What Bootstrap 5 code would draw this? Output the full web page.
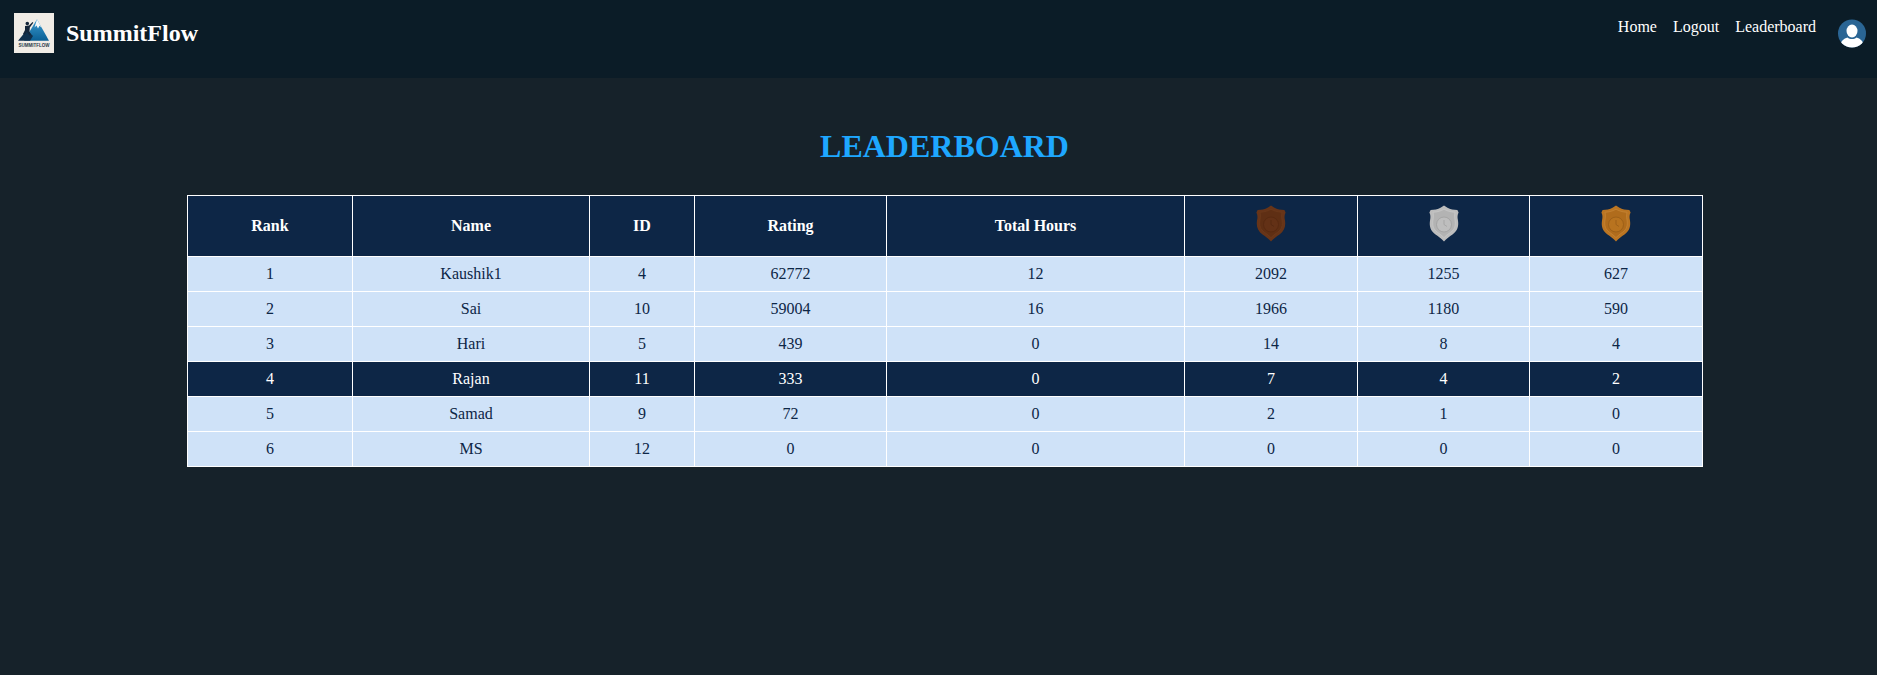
<!DOCTYPE html>
<html lang="en">
<head>
    <meta charset="UTF-8">
    <meta name="viewport" content="width=device-width, initial-scale=1.0">
    <title>SummitFlow - Leaderboard</title>
    <link href="https://cdn.jsdelivr.net/npm/bootstrap@5.3.0/dist/css/bootstrap.min.css" rel="stylesheet">
    <style>
        body {
            background: #16222a;
            font-family: "Liberation Serif", "Times New Roman", serif;
            font-size: 16px;
            color: #fff;
            min-height: 675px;
        }
        .top-bar {
            background: #0b1c27;
            height: 78px;
            padding: 13px 11px 0 14px;
            align-items: flex-start;
        }
        .logo-box {
            width: 40px;
            height: 40px;
            display: block;
        }
        .brand-name {
            color: #fff;
            font-size: 24px;
            font-weight: 700;
            line-height: 40px;
            padding: 0;
            margin: 0 0 0 12px;
        }
        .top-links {
            gap: 16px;
            margin-right: 22px;
        }
        .top-links .nav-link {
            color: #fff;
            padding: 0;
            line-height: 27px;
        }
        .user-pic {
            width: 28px;
            height: 29px;
            display: block;
            margin-top: 6px;
        }
        .board-wrap {
            width: 1515px;
            margin: 0 0 0 187px;
        }
        .page-title {
            color: #1ea7ff;
            font-family: inherit;
            font-size: 32px;
            font-weight: 700;
            line-height: 37px;
            text-align: center;
            margin: 50px 0 30px;
        }
        .board {
            width: 1515px;
            table-layout: fixed;
            border-collapse: collapse;
            text-align: center;
        }
        .board th, .board td {
            border: 1px solid #fff;
            vertical-align: middle;
            padding: 0;
        }
        .board th {
            background: #0d2646;
            color: #fff;
            font-weight: 700;
            height: 61px;
        }
        .board td {
            background: #cfe2f8;
            color: #0d2646;
            height: 35px;
        }
        .board tr.me td {
            background: #0d2646;
            color: #fff;
        }
        .medal {
            width: 30px;
            height: 37px;
            display: block;
            margin: -6px auto 0;
        }
    </style>
</head>
<body>
    <svg width="0" height="0" class="position-absolute">
        <defs>
            <path id="shield" d="M15 .6 L18.500 2.800 C21 4.400 25 4.800 28.400 5 L29.600 7.500 C28.400 10 28.300 12 28.900 15 C30 21 28.500 26 23.500 29.500 C20.500 31.600 17.500 33.500 15 36.400 C12.500 33.500 9.500 31.600 6.500 29.500 C1.500 26 0 21 1.100 15 C1.700 12 1.600 10 .4 7.500 L1.600 5 C5 4.800 9 4.400 11.500 2.800 Z"/>
            <path id="shield-in" d="M15 4.200 C18 6 21.500 7 26 7.300 C25.400 10 25.400 12 26 15 C27 20.500 25.500 24.500 21.500 27.300 C19 29 17 30.500 15 32.600 C13 30.500 11 29 8.500 27.300 C4.500 24.500 3 20.500 4 15 C4.600 12 4.600 10 4 7.300 C8.500 7 12 6 15 4.200 Z"/>
            <path id="hands" d="M15 15 L15 19.500 L18 21.500"/>
        </defs>
    </svg>

    <nav class="d-flex justify-content-between top-bar">
        <div class="d-flex">
            <svg class="logo-box" viewBox="0 0 40 40" role="img" aria-label="SummitFlow logo">
                <defs>
                    <linearGradient id="peak" x1="0" y1="0" x2="0" y2="1">
                        <stop offset="0" stop-color="#3a9bd0"/>
                        <stop offset="1" stop-color="#0b5f94"/>
                    </linearGradient>
                </defs>
                <rect width="40" height="40" fill="#f0ece6"/>
                <path d="M10 27.700 L23 6.300 L35 27.700 Z" fill="url(#peak)"/>
                <path d="M23 6.300 L27.500 14.500 L25.500 12.800 L24 15.500 L22.500 12.500 L20.500 14.500 Z" fill="#f4f7f8"/>
                <path d="M4 27.700 L10 20.500 L14 18 L19 23 L16 27.700 Z" fill="#10304c"/>
                <path d="M11.500 10.500 a1.800 1.800 0 1 1 3.600 0 a1.800 1.800 0 1 1 -3.600 0 M11 13 L15 12.500 L18.500 9 L19.300 9.800 L15.800 14.500 L15.500 18.500 L17 21.500 L15.500 22.500 L13 19 L10.500 22 L9 21 L11 17 Z" fill="#14263a"/>
                <text x="20" y="33.500" text-anchor="middle" font-family="Liberation Sans, sans-serif" font-size="4.500" font-weight="700" fill="#27394a">SUMMITFLOW</text>
            </svg>
            <div class="brand-name">SummitFlow</div>
        </div>
        <div class="d-flex">
            <ul class="nav top-links">
                <li class="nav-item"><a class="nav-link" href="#">Home</a></li>
                <li class="nav-item"><a class="nav-link" href="#">Logout</a></li>
                <li class="nav-item"><a class="nav-link" href="#">Leaderboard</a></li>
            </ul>
            <svg class="user-pic" viewBox="0 0 28 29" role="img" aria-label="User">
                <defs><clipPath id="round"><circle cx="14" cy="14.500" r="14"/></clipPath></defs>
                <circle cx="14" cy="14.500" r="14" fill="#2a6594"/>
                <g clip-path="url(#round)" fill="#fff">
                    <ellipse cx="14" cy="12" rx="5.500" ry="6.500"/>
                    <path d="M2 29 C2 22 6 19.500 9.500 18.500 C12 20.500 16 20.500 18.500 18.500 C22 19.500 26 22 26 29 Z"/>
                </g>
            </svg>
        </div>
    </nav>

    <div class="board-wrap">
        <h1 class="page-title">LEADERBOARD</h1>
        <table class="board">
            <colgroup>
                <col style="width: 165px">
                <col style="width: 237px">
                <col style="width: 105px">
                <col style="width: 192px">
                <col style="width: 298px">
                <col style="width: 173px">
                <col style="width: 172px">
                <col style="width: 173px">
            </colgroup>
            <thead>
                <tr>
                    <th>Rank</th>
                    <th>Name</th>
                    <th>ID</th>
                    <th>Rating</th>
                    <th>Total Hours</th>
                    <th>
                        <svg class="medal" viewBox="0 0 30 37" role="img" aria-label="Bronze badge">
                            <use href="#shield" fill="#673418"/>
                            <use href="#shield-in" fill="#5f2f14" stroke="#6f3c1d" stroke-width=".6"/>
                            <circle cx="15" cy="19.500" r="7.500" fill="#633116" stroke="#552810" stroke-width=".8"/>
                            <use href="#hands" fill="none" stroke="#4e250f" stroke-width=".6"/>
                        </svg>
                    </th>
                    <th>
                        <svg class="medal" viewBox="0 0 30 37" role="img" aria-label="Silver badge">
                            <use href="#shield" fill="#bdbdbd"/>
                            <use href="#shield-in" fill="#b3b3b3" stroke="#cdcdcd" stroke-width=".6"/>
                            <circle cx="15" cy="19.500" r="7.500" fill="#bebebe" stroke="#a0a0a0" stroke-width=".8"/>
                            <use href="#hands" fill="none" stroke="#989898" stroke-width=".6"/>
                        </svg>
                    </th>
                    <th>
                        <svg class="medal" viewBox="0 0 30 37" role="img" aria-label="Gold badge">
                            <use href="#shield" fill="#bb7522"/>
                            <use href="#shield-in" fill="#b06c1c" stroke="#c98a3c" stroke-width=".6"/>
                            <circle cx="15" cy="19.500" r="7.500" fill="#b8731f" stroke="#975c17" stroke-width=".8"/>
                            <use href="#hands" fill="none" stroke="#8f5615" stroke-width=".6"/>
                        </svg>
                    </th>
                </tr>
            </thead>
            <tbody>
                <tr><td>1</td><td>Kaushik1</td><td>4</td><td>62772</td><td>12</td><td>2092</td><td>1255</td><td>627</td></tr>
                <tr><td>2</td><td>Sai</td><td>10</td><td>59004</td><td>16</td><td>1966</td><td>1180</td><td>590</td></tr>
                <tr><td>3</td><td>Hari</td><td>5</td><td>439</td><td>0</td><td>14</td><td>8</td><td>4</td></tr>
                <tr class="me"><td>4</td><td>Rajan</td><td>11</td><td>333</td><td>0</td><td>7</td><td>4</td><td>2</td></tr>
                <tr><td>5</td><td>Samad</td><td>9</td><td>72</td><td>0</td><td>2</td><td>1</td><td>0</td></tr>
                <tr><td>6</td><td>MS</td><td>12</td><td>0</td><td>0</td><td>0</td><td>0</td><td>0</td></tr>
            </tbody>
        </table>
    </div>

    <script src="https://cdn.jsdelivr.net/npm/bootstrap@5.3.0/dist/js/bootstrap.bundle.min.js"></script>
</body>
</html>
